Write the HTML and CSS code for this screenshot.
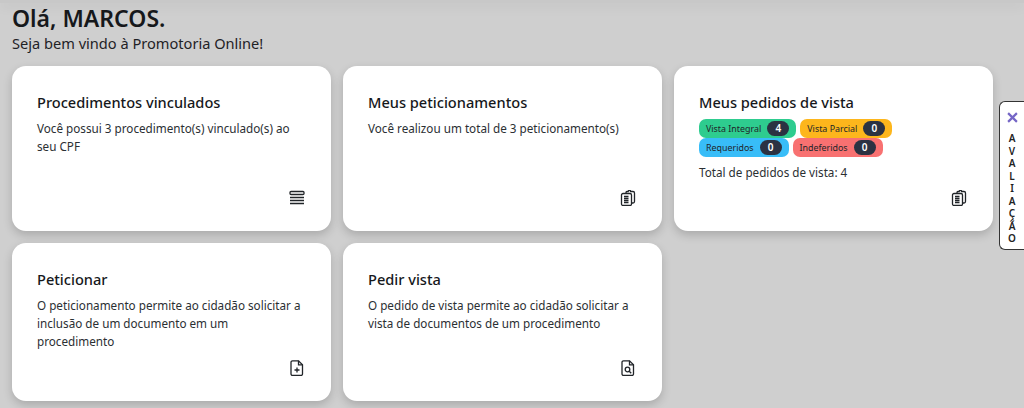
FILE: index.html
```html
<!DOCTYPE html>
<html lang="pt-BR">
<head>
    <meta charset="UTF-8">
    <title>Promotoria Online</title>
    <link rel="stylesheet" href="styles.css">
</head>
<body>
    <div class="topbar"></div>
    <main class="page">
        <h1 class="hello">Olá, MARCOS.</h1>
        <p class="welcome">Seja bem vindo à Promotoria Online!</p>

        <div class="cards">
            <div class="card">
                <h2>Procedimentos vinculados</h2>
                <p>Você possui 3 procedimento(s) vinculado(s) ao seu CPF</p>
                <svg class="icon" viewBox="0 0 16 16"><rect x="1" y="1.500" width="14" height="3" rx="1"/><path d="M1 7.500h14M1 10.500h14M1 13.500h14"/></svg>
            </div>

            <div class="card">
                <h2>Meus peticionamentos</h2>
                <p>Você realizou um total de 3 peticionamento(s)</p>
                <svg class="icon" viewBox="0 0 16 16"><path d="M6 3.500V2.500a1 1 0 0 1 1-1h1.200a1.200 1.200 0 0 1 2.400 0H13a1.500 1.500 0 0 1 1.500 1.500v8.500a1.500 1.500 0 0 1-1.500 1.500h-1.500"/><rect x="1.500" y="3.500" width="10" height="12" rx="1.500"/><path d="M4 6.500h4.500M4 8.500h4.500M4 10.500h4.500M4 12.500h4.500"/></svg>
            </div>

            <div class="card">
                <h2>Meus pedidos de vista</h2>
                <div class="badges">
                    <span class="badge green">Vista Integral <b>4</b></span>
                    <span class="badge yellow">Vista Parcial <b>0</b></span>
                    <span class="badge blue">Requeridos <b>0</b></span>
                    <span class="badge red">Indeferidos <b>0</b></span>
                </div>
                <p>Total de pedidos de vista: 4</p>
                <svg class="icon" viewBox="0 0 16 16"><path d="M6 3.500V2.500a1 1 0 0 1 1-1h1.200a1.200 1.200 0 0 1 2.400 0H13a1.500 1.500 0 0 1 1.500 1.500v8.500a1.500 1.500 0 0 1-1.500 1.500h-1.500"/><rect x="1.500" y="3.500" width="10" height="12" rx="1.500"/><path d="M4 6.500h4.500M4 8.500h4.500M4 10.500h4.500M4 12.500h4.500"/></svg>
            </div>

            <div class="card">
                <h2>Peticionar</h2>
                <p>O peticionamento permite ao cidadão solicitar a inclusão de um documento em um procedimento</p>
                <svg class="icon" viewBox="0 0 16 16"><path d="M3.500.800h6l4 4V14a1.500 1.500 0 0 1-1.500 1.500H3.500A1.500 1.500 0 0 1 2 14V2.300A1.500 1.500 0 0 1 3.500.800z"/><path d="M9.500.800v4h4M8 7.500v5M5.500 10h5"/></svg>
            </div>

            <div class="card">
                <h2>Pedir vista</h2>
                <p>O pedido de vista permite ao cidadão solicitar a vista de documentos de um procedimento</p>
                <svg class="icon" viewBox="0 0 16 16"><path d="M3.500.800h6l4 4V14a1.500 1.500 0 0 1-1.500 1.500H3.500A1.500 1.500 0 0 1 2 14V2.300A1.500 1.500 0 0 1 3.500.800z"/><path d="M9.500.800v4h4"/><circle cx="7.500" cy="9.500" r="2.300"/><path d="M9.200 11.200l2 2"/></svg>
            </div>
        </div>
    </main>

    <aside class="rating">
        <svg class="rating-close" viewBox="0 0 10 10"><path d="M1 1l8 8M9 1l-8 8"/></svg>
        <span class="rating-label">A V A L I A Ç Ã O</span>
    </aside>
</body>
</html>
```

FILE: styles.css
```css
html, body {
    margin: 0;
    height: 408px;
    overflow: hidden;
}
body {
    background: #cfcfcf;
    color: #212529;
    font-family: "Noto Sans", "Open Sans", sans-serif;
    position: relative;
}
.topbar {
    height: 3px;
    background: #c8c8c8;
    box-shadow: 0 3px 12px rgba(0, 0, 0, 0.1);
}
.page {
    padding: 0 12px;
}
.hello {
    margin: 0;
    font-size: 23px;
    line-height: 30px;
    font-weight: 600;
    color: #16181b;
}
.welcome {
    margin: 0 0 13px;
    font-size: 14.600px;
    line-height: 20px;
    color: #1f2226;
}
.cards {
    display: grid;
    grid-template-columns: repeat(3, 319px);
    grid-template-rows: 165px 158px;
    gap: 12px;
}
.card {
    position: relative;
    background: #fff;
    border-radius: 14px;
    padding: 26px 25px 0;
    box-shadow: 0 4px 10px rgba(0, 0, 0, 0.18);
}
.card h2 {
    margin: 0 0 7px;
    font-size: 14.600px;
    line-height: 20px;
    font-weight: 500;
    color: #16181b;
}
.card p {
    margin: 0;
    font-size: 11.700px;
    line-height: 18px;
    color: #2b2f33;
}
.icon {
    position: absolute;
    right: 26px;
    bottom: 25px;
    width: 16px;
    height: 16px;
    fill: none;
    stroke: #212529;
    stroke-width: 1.300;
}
.badges {
    display: flex;
    flex-wrap: wrap;
    gap: 0 4px;
    margin-bottom: 6px;
}
.badge {
    display: inline-flex;
    align-items: center;
    gap: 6px;
    height: 19px;
    padding: 0 7px;
    border-radius: 7px;
    font-size: 8.900px;
    color: #212529;
}
.badge b {
    min-width: 22px;
    height: 15px;
    line-height: 15px;
    border-radius: 8px;
    background: #2b3242;
    color: #fff;
    text-align: center;
    font-weight: 600;
    font-size: 10px;
}
.green { background: #2ecc8f; }
.yellow { background: #fdb61c; }
.blue { background: #38bdf8; }
.red { background: #f87171; }
.rating {
    position: absolute;
    top: 101px;
    right: 0;
    width: 25px;
    height: 149px;
    box-sizing: border-box;
    background: #fff;
    border: 1px solid #333;
    border-right: 0;
    border-radius: 6px 0 0 6px;
    display: flex;
    flex-direction: column;
    align-items: center;
}
.rating-close {
    width: 11px;
    height: 11px;
    margin-top: 10px;
    fill: none;
    stroke: #7566c6;
    stroke-width: 2;
}
.rating-label {
    width: 10px;
    margin-top: 9px;
    font-size: 10px;
    font-weight: 600;
    line-height: 12.500px;
    text-align: center;
    color: #222;
}
```
